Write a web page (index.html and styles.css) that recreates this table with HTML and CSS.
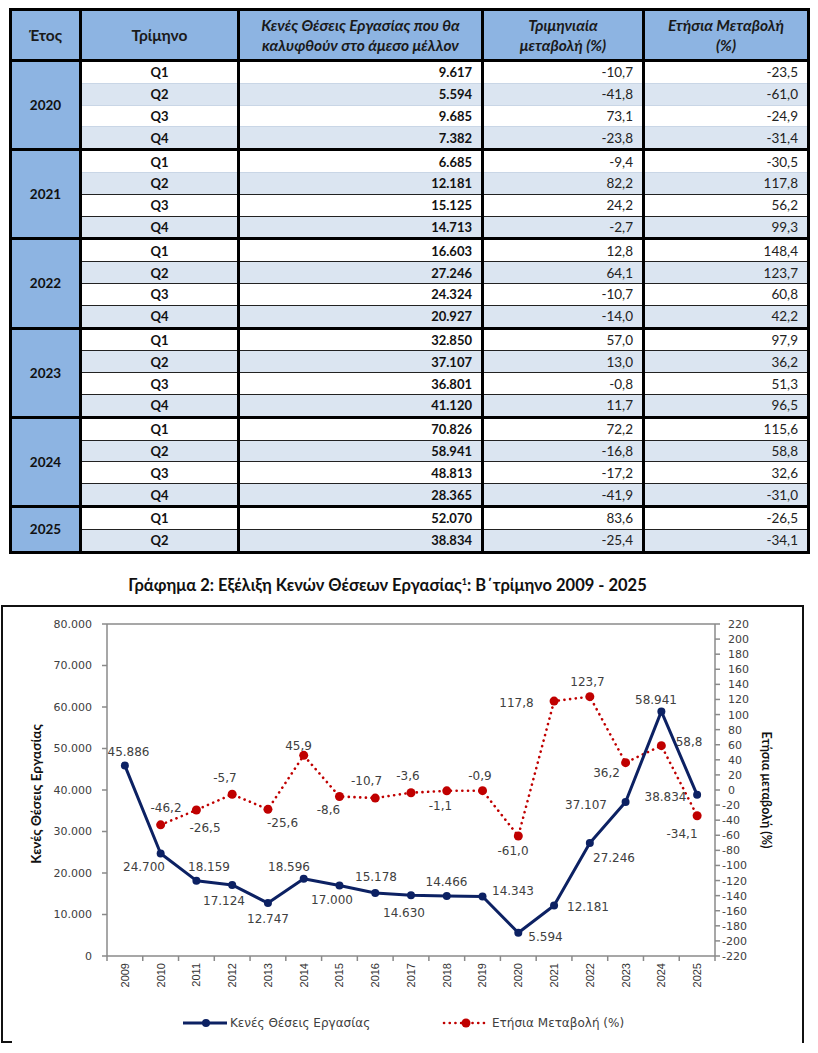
FILE: index.html
```html
<!DOCTYPE html>
<html lang="el">
<head>
<meta charset="utf-8">
<title>Κενές Θέσεις Εργασίας</title>
<link rel="stylesheet" href="styles.css">
</head>
<body>
<div class="page">
  <table class="data">
    <colgroup>
      <col class="c-year"><col class="c-q"><col class="c-val"><col class="c-qq"><col class="c-yy">
    </colgroup>
    <thead>
      <tr>
        <th>Έτος</th>
        <th>Τρίμηνο</th>
        <th class="it">Κενές Θέσεις Εργασίας που θα<br>καλυφθούν στο άμεσο μέλλον</th>
        <th class="it">Τριμηνιαία<br>μεταβολή (%)</th>
        <th class="it">Ετήσια Μεταβολή<br>(%)</th>
      </tr>
    </thead>
    <tbody class="soft">
      <tr><td class="year" rowspan="4">2020</td><td class="q">Q1</td><td class="v">9.617</td><td class="n">-10,7</td><td class="n">-23,5</td></tr>
      <tr class="alt"><td class="q">Q2</td><td class="v">5.594</td><td class="n">-41,8</td><td class="n">-61,0</td></tr>
      <tr><td class="q">Q3</td><td class="v">9.685</td><td class="n">73,1</td><td class="n">-24,9</td></tr>
      <tr class="alt"><td class="q">Q4</td><td class="v">7.382</td><td class="n">-23,8</td><td class="n">-31,4</td></tr>
    </tbody>
    <tbody>
      <tr><td class="year" rowspan="4">2021</td><td class="q">Q1</td><td class="v">6.685</td><td class="n">-9,4</td><td class="n">-30,5</td></tr>
      <tr class="alt soft-top"><td class="q">Q2</td><td class="v">12.181</td><td class="n">82,2</td><td class="n">117,8</td></tr>
      <tr><td class="q">Q3</td><td class="v">15.125</td><td class="n">24,2</td><td class="n">56,2</td></tr>
      <tr class="alt"><td class="q">Q4</td><td class="v">14.713</td><td class="n">-2,7</td><td class="n">99,3</td></tr>
    </tbody>
    <tbody>
      <tr><td class="year" rowspan="4">2022</td><td class="q">Q1</td><td class="v">16.603</td><td class="n">12,8</td><td class="n">148,4</td></tr>
      <tr class="alt"><td class="q">Q2</td><td class="v">27.246</td><td class="n">64,1</td><td class="n">123,7</td></tr>
      <tr><td class="q">Q3</td><td class="v">24.324</td><td class="n">-10,7</td><td class="n">60,8</td></tr>
      <tr class="alt"><td class="q">Q4</td><td class="v">20.927</td><td class="n">-14,0</td><td class="n">42,2</td></tr>
    </tbody>
    <tbody>
      <tr><td class="year" rowspan="4">2023</td><td class="q">Q1</td><td class="v">32.850</td><td class="n">57,0</td><td class="n">97,9</td></tr>
      <tr class="alt"><td class="q">Q2</td><td class="v">37.107</td><td class="n">13,0</td><td class="n">36,2</td></tr>
      <tr><td class="q">Q3</td><td class="v">36.801</td><td class="n">-0,8</td><td class="n">51,3</td></tr>
      <tr class="alt"><td class="q">Q4</td><td class="v">41.120</td><td class="n">11,7</td><td class="n">96,5</td></tr>
    </tbody>
    <tbody>
      <tr><td class="year" rowspan="4">2024</td><td class="q">Q1</td><td class="v">70.826</td><td class="n">72,2</td><td class="n">115,6</td></tr>
      <tr class="alt"><td class="q">Q2</td><td class="v">58.941</td><td class="n">-16,8</td><td class="n">58,8</td></tr>
      <tr><td class="q">Q3</td><td class="v">48.813</td><td class="n">-17,2</td><td class="n">32,6</td></tr>
      <tr class="alt"><td class="q">Q4</td><td class="v">28.365</td><td class="n">-41,9</td><td class="n">-31,0</td></tr>
    </tbody>
    <tbody>
      <tr><td class="year" rowspan="2">2025</td><td class="q">Q1</td><td class="v">52.070</td><td class="n">83,6</td><td class="n">-26,5</td></tr>
      <tr class="alt"><td class="q">Q2</td><td class="v">38.834</td><td class="n">-25,4</td><td class="n">-34,1</td></tr>
    </tbody>
  </table>

  <h2 class="chart-title">Γράφημα 2: Εξέλιξη Κενών Θέσεων Εργασίας<sup>1</sup>: Β΄τρίμηνο 2009 - 2025</h2>

  <div class="chart-box">
    <svg class="chart" width="799" height="436" viewBox="3 607 799 436" xmlns="http://www.w3.org/2000/svg">
      <g class="frame">
        <line x1="107" y1="624" x2="715" y2="624"/>
        <line x1="107" y1="624" x2="107" y2="956"/>
        <line x1="715" y1="624" x2="715" y2="956"/>
        <line x1="107" y1="956" x2="715" y2="956"/>
      </g>
      <g class="frame">
        <line x1="102" y1="956" x2="107" y2="956"/><line x1="102" y1="914.5" x2="107" y2="914.5"/>
        <line x1="102" y1="873" x2="107" y2="873"/><line x1="102" y1="831.5" x2="107" y2="831.5"/>
        <line x1="102" y1="790" x2="107" y2="790"/><line x1="102" y1="748.5" x2="107" y2="748.5"/>
        <line x1="102" y1="707" x2="107" y2="707"/><line x1="102" y1="665.5" x2="107" y2="665.5"/>
        <line x1="102" y1="624" x2="107" y2="624"/>
      </g>
      <g class="axlbl" text-anchor="end">
        <text x="92" y="956" dy=".36em">0</text>
        <text x="92" y="914.5" dy=".36em">10.000</text>
        <text x="92" y="873" dy=".36em">20.000</text>
        <text x="92" y="831.5" dy=".36em">30.000</text>
        <text x="92" y="790" dy=".36em">40.000</text>
        <text x="92" y="748.5" dy=".36em">50.000</text>
        <text x="92" y="707" dy=".36em">60.000</text>
        <text x="92" y="665.5" dy=".36em">70.000</text>
        <text x="92" y="624" dy=".36em">80.000</text>
      </g>
      <g class="frame">
        <line x1="715" y1="624" x2="720" y2="624"/><line x1="715" y1="639.09" x2="720" y2="639.09"/>
        <line x1="715" y1="654.18" x2="720" y2="654.18"/><line x1="715" y1="669.27" x2="720" y2="669.27"/>
        <line x1="715" y1="684.36" x2="720" y2="684.36"/><line x1="715" y1="699.45" x2="720" y2="699.45"/>
        <line x1="715" y1="714.55" x2="720" y2="714.55"/><line x1="715" y1="729.64" x2="720" y2="729.64"/>
        <line x1="715" y1="744.73" x2="720" y2="744.73"/><line x1="715" y1="759.82" x2="720" y2="759.82"/>
        <line x1="715" y1="774.91" x2="720" y2="774.91"/><line x1="715" y1="790" x2="720" y2="790"/>
        <line x1="715" y1="805.09" x2="720" y2="805.09"/><line x1="715" y1="820.18" x2="720" y2="820.18"/>
        <line x1="715" y1="835.27" x2="720" y2="835.27"/><line x1="715" y1="850.36" x2="720" y2="850.36"/>
        <line x1="715" y1="865.45" x2="720" y2="865.45"/><line x1="715" y1="880.55" x2="720" y2="880.55"/>
        <line x1="715" y1="895.64" x2="720" y2="895.64"/><line x1="715" y1="910.73" x2="720" y2="910.73"/>
        <line x1="715" y1="925.82" x2="720" y2="925.82"/><line x1="715" y1="940.91" x2="720" y2="940.91"/>
        <line x1="715" y1="956" x2="720" y2="956"/>
      </g>
      <g class="axlbl">
        <text x="728" y="624" dy=".36em">220</text>
        <text x="728" y="639.09" dy=".36em">200</text>
        <text x="728" y="654.18" dy=".36em">180</text>
        <text x="728" y="669.27" dy=".36em">160</text>
        <text x="728" y="684.36" dy=".36em">140</text>
        <text x="728" y="699.45" dy=".36em">120</text>
        <text x="728" y="714.55" dy=".36em">100</text>
        <text x="728" y="729.64" dy=".36em">80</text>
        <text x="728" y="744.73" dy=".36em">60</text>
        <text x="728" y="759.82" dy=".36em">40</text>
        <text x="728" y="774.91" dy=".36em">20</text>
        <text x="728" y="790" dy=".36em">0</text>
        <text x="722" y="805.09" dy=".36em">-20</text>
        <text x="722" y="820.18" dy=".36em">-40</text>
        <text x="722" y="835.27" dy=".36em">-60</text>
        <text x="722" y="850.36" dy=".36em">-80</text>
        <text x="722" y="865.45" dy=".36em">-100</text>
        <text x="722" y="880.55" dy=".36em">-120</text>
        <text x="722" y="895.64" dy=".36em">-140</text>
        <text x="722" y="910.73" dy=".36em">-160</text>
        <text x="722" y="925.82" dy=".36em">-180</text>
        <text x="722" y="940.91" dy=".36em">-200</text>
        <text x="722" y="956" dy=".36em">-220</text>
      </g>
      <g class="frame">
        <line x1="107" y1="956" x2="107" y2="961"/><line x1="142.76" y1="956" x2="142.76" y2="961"/>
        <line x1="178.53" y1="956" x2="178.53" y2="961"/><line x1="214.29" y1="956" x2="214.29" y2="961"/>
        <line x1="250.06" y1="956" x2="250.06" y2="961"/><line x1="285.82" y1="956" x2="285.82" y2="961"/>
        <line x1="321.59" y1="956" x2="321.59" y2="961"/><line x1="357.35" y1="956" x2="357.35" y2="961"/>
        <line x1="393.12" y1="956" x2="393.12" y2="961"/><line x1="428.88" y1="956" x2="428.88" y2="961"/>
        <line x1="464.65" y1="956" x2="464.65" y2="961"/><line x1="500.41" y1="956" x2="500.41" y2="961"/>
        <line x1="536.18" y1="956" x2="536.18" y2="961"/><line x1="571.94" y1="956" x2="571.94" y2="961"/>
        <line x1="607.71" y1="956" x2="607.71" y2="961"/><line x1="643.47" y1="956" x2="643.47" y2="961"/>
        <line x1="679.24" y1="956" x2="679.24" y2="961"/><line x1="715" y1="956" x2="715" y2="961"/>
      </g>
      <g class="yrlbl" text-anchor="end">
        <text transform="translate(124.88 963) rotate(-90)" dy=".36em">2009</text>
        <text transform="translate(160.65 963) rotate(-90)" dy=".36em">2010</text>
        <text transform="translate(196.41 963) rotate(-90)" dy=".36em">2011</text>
        <text transform="translate(232.18 963) rotate(-90)" dy=".36em">2012</text>
        <text transform="translate(267.94 963) rotate(-90)" dy=".36em">2013</text>
        <text transform="translate(303.71 963) rotate(-90)" dy=".36em">2014</text>
        <text transform="translate(339.47 963) rotate(-90)" dy=".36em">2015</text>
        <text transform="translate(375.24 963) rotate(-90)" dy=".36em">2016</text>
        <text transform="translate(411 963) rotate(-90)" dy=".36em">2017</text>
        <text transform="translate(446.77 963) rotate(-90)" dy=".36em">2018</text>
        <text transform="translate(482.53 963) rotate(-90)" dy=".36em">2019</text>
        <text transform="translate(518.3 963) rotate(-90)" dy=".36em">2020</text>
        <text transform="translate(554.06 963) rotate(-90)" dy=".36em">2021</text>
        <text transform="translate(589.83 963) rotate(-90)" dy=".36em">2022</text>
        <text transform="translate(625.59 963) rotate(-90)" dy=".36em">2023</text>
        <text transform="translate(661.36 963) rotate(-90)" dy=".36em">2024</text>
        <text transform="translate(697.12 963) rotate(-90)" dy=".36em">2025</text>
      </g>
      <text class="axtitle axtitle-l" text-anchor="middle" transform="translate(36 794) rotate(-90)" dy=".36em">Κενές Θέσεις Εργασίας</text>
      <text class="axtitle" text-anchor="middle" transform="translate(766 790) rotate(90)" dy=".36em">Ετήσια μεταβολή (%)</text>

      <polyline class="red-line" points="160.65,824.86 196.41,810 232.18,794.3 267.94,809.32 303.71,755.37 339.47,796.49 375.24,798.07 411,792.72 446.77,790.83 482.53,790.68 518.3,836.03 554.06,701.12 589.83,696.66 625.59,762.69 661.36,745.63 697.12,815.73"/>
      <g class="red-dot">
        <circle cx="160.65" cy="824.86" r="4.5"/><circle cx="196.41" cy="810" r="4.5"/>
        <circle cx="232.18" cy="794.3" r="4.5"/><circle cx="267.94" cy="809.32" r="4.5"/>
        <circle cx="303.71" cy="755.37" r="4.5"/><circle cx="339.47" cy="796.49" r="4.5"/>
        <circle cx="375.24" cy="798.07" r="4.5"/><circle cx="411" cy="792.72" r="4.5"/>
        <circle cx="446.77" cy="790.83" r="4.5"/><circle cx="482.53" cy="790.68" r="4.5"/>
        <circle cx="518.3" cy="836.03" r="4.5"/><circle cx="554.06" cy="701.12" r="4.5"/>
        <circle cx="589.83" cy="696.66" r="4.5"/><circle cx="625.59" cy="762.69" r="4.5"/>
        <circle cx="661.36" cy="745.63" r="4.5"/><circle cx="697.12" cy="815.73" r="4.5"/>
      </g>

      <polyline class="blue-line" points="124.88,765.57 160.65,853.49 196.41,880.64 232.18,884.94 267.94,903.1 303.71,878.83 339.47,885.45 375.24,893.01 411,895.29 446.77,895.97 482.53,896.48 518.3,932.78 554.06,905.45 589.83,842.93 625.59,802.01 661.36,711.39 697.12,794.84"/>
      <g class="blue-dot">
        <circle cx="124.88" cy="765.57" r="4"/><circle cx="160.65" cy="853.49" r="4"/>
        <circle cx="196.41" cy="880.64" r="4"/><circle cx="232.18" cy="884.94" r="4"/>
        <circle cx="267.94" cy="903.1" r="4"/><circle cx="303.71" cy="878.83" r="4"/>
        <circle cx="339.47" cy="885.45" r="4"/><circle cx="375.24" cy="893.01" r="4"/>
        <circle cx="411" cy="895.29" r="4"/><circle cx="446.77" cy="895.97" r="4"/>
        <circle cx="482.53" cy="896.48" r="4"/><circle cx="518.3" cy="932.78" r="4"/>
        <circle cx="554.06" cy="905.45" r="4"/><circle cx="589.83" cy="842.93" r="4"/>
        <circle cx="625.59" cy="802.01" r="4"/><circle cx="661.36" cy="711.39" r="4"/>
        <circle cx="697.12" cy="794.84" r="4"/>
      </g>

      <g class="dlbl" text-anchor="middle">
        <text x="128.5" y="752" dy=".36em">45.886</text>
        <text x="144" y="867" dy=".36em">24.700</text>
        <text x="209" y="867" dy=".36em">18.159</text>
        <text x="224" y="901" dy=".36em">17.124</text>
        <text x="268" y="919" dy=".36em">12.747</text>
        <text x="289" y="867" dy=".36em">18.596</text>
        <text x="332" y="900" dy=".36em">17.000</text>
        <text x="376" y="877" dy=".36em">15.178</text>
        <text x="404" y="913" dy=".36em">14.630</text>
        <text x="446.5" y="882" dy=".36em">14.466</text>
        <text x="513" y="891" dy=".36em">14.343</text>
        <text x="545.5" y="937" dy=".36em">5.594</text>
        <text x="588" y="907" dy=".36em">12.181</text>
        <text x="614" y="858" dy=".36em">27.246</text>
        <text x="586" y="805" dy=".36em">37.107</text>
        <text x="656" y="700" dy=".36em">58.941</text>
        <text x="665.5" y="797" dy=".36em">38.834</text>

        <text x="166" y="808" dy=".36em">-46,2</text>
        <text x="205" y="828" dy=".36em">-26,5</text>
        <text x="225" y="778" dy=".36em">-5,7</text>
        <text x="282.5" y="823" dy=".36em">-25,6</text>
        <text x="298.5" y="746" dy=".36em">45,9</text>
        <text x="328.5" y="810" dy=".36em">-8,6</text>
        <text x="366.5" y="781" dy=".36em">-10,7</text>
        <text x="408" y="776" dy=".36em">-3,6</text>
        <text x="440.5" y="806" dy=".36em">-1,1</text>
        <text x="480" y="776" dy=".36em">-0,9</text>
        <text x="513" y="851" dy=".36em">-61,0</text>
        <text x="516.5" y="703" dy=".36em">117,8</text>
        <text x="587.5" y="682" dy=".36em">123,7</text>
        <text x="606.5" y="773" dy=".36em">36,2</text>
        <text x="689" y="742" dy=".36em">58,8</text>
        <text x="682" y="834" dy=".36em">-34,1</text>
      </g>

      <line class="blue-line" x1="183" y1="1023" x2="227" y2="1023"/>
      <circle class="blue-dot" cx="206" cy="1023" r="4"/>
      <text class="leg" x="230" y="1023" dy=".36em">Κενές Θέσεις Εργασίας</text>
      <line class="red-line" x1="444" y1="1023" x2="488" y2="1023"/>
      <circle class="red-dot" cx="466" cy="1023" r="4.5"/>
      <text class="leg" x="492" y="1023" dy=".36em">Ετήσια Μεταβολή (%)</text>

      <line class="stub" x1="3" y1="1042" x2="12" y2="1042"/>
    </svg>
  </div>
</div>
</body>
</html>
```

FILE: styles.css
```css
html, body {
  margin: 0;
  padding: 0;
  background: #ffffff;
}

.page {
  width: 818px;
  padding-top: 8px;
  font-family: Lato, "Open Sans", "Noto Sans", sans-serif;
  color: #111;
}

/* ---------- table ---------- */
.data {
  margin-left: 9px;
  width: 798px;
  table-layout: fixed;
  border-collapse: collapse;
  border: 3px solid #000;
  font-size: 13px;
}

.c-year { width: 70px; }
.c-q { width: 158px; }
.c-val { width: 244px; }
.c-qq { width: 161px; }
.c-yy { width: 165px; }

.data th {
  height: 48px;
  padding: 0 4px;
  background: #8db4e2;
  border: 3px solid #000;
  font-weight: 700;
  font-size: 15.5px;
  line-height: 20px;
  color: #1a1a1a;
  text-align: center;
  vertical-align: middle;
}

.data th.it {
  font-style: italic;
}

.data tbody {
  border-top: 3px solid #000;
  border-bottom: 3px solid #000;
}

.data td {
  height: 20.8px;
  padding: 0 9px;
  border-left: 3px solid #000;
  border-right: 3px solid #000;
  border-top: 1px solid #222;
  line-height: 20px;
  white-space: nowrap;
  background: #ffffff;
}

.data tr.alt td {
  background: #dbe5f1;
}

.data tbody.soft td,
.data tr.soft-top td {
  border-top: 1px solid #c9d6e6;
}

.data td.year {
  background: #8db4e2;
  border: 3px solid #000;
  text-align: center;
  font-weight: 700;
  font-size: 13.5px;
  padding: 0;
}

.data tr.alt td.year,
.data tbody.soft td.year {
  background: #8db4e2;
}

.data td.q {
  text-align: center;
  font-weight: 700;
}

.data td.v {
  text-align: right;
  font-weight: 700;
}

.data td.n {
  text-align: right;
  font-weight: 400;
  font-size: 13.5px;
  color: #222;
}

/* ---------- chart title ---------- */
.chart-title {
  margin: 21px 0 10px;
  height: 20px;
  padding-right: 43px;
  font-size: 16.5px;
  line-height: 20px;
  font-weight: 700;
  text-align: center;
  color: #111;
}

.chart-title sup {
  font-size: 9px;
  line-height: 0;
  vertical-align: 6px;
}

/* ---------- chart ---------- */
.chart-box {
  margin-left: 1px;
  width: 799px;
  height: 436px;
  border: 2px solid #111;
  border-bottom: none;
}

.chart {
  display: block;
}

.frame line {
  stroke: #8a8a8a;
  stroke-width: 1.5;
}

.axlbl text {
  font-family: "DejaVu Sans", Verdana, sans-serif;
  font-size: 11px;
  fill: #404040;
}

.yrlbl text {
  font-family: "Liberation Sans", Arial, sans-serif;
  font-size: 11px;
  fill: #333;
}

.axtitle {
  font-family: Lato, "Open Sans", sans-serif;
  font-size: 12.5px;
  font-weight: 700;
  fill: #111;
}

.axtitle-l {
  font-size: 13.5px;
}

.dlbl text {
  font-family: "DejaVu Sans", Verdana, sans-serif;
  font-size: 12px;
  fill: #404040;
}

.leg {
  font-family: "DejaVu Sans", Verdana, sans-serif;
  font-size: 12px;
  fill: #404040;
}

.blue-line {
  fill: none;
  stroke: #0c2163;
  stroke-width: 3;
  stroke-linejoin: round;
}

.blue-dot circle,
circle.blue-dot {
  fill: #0c2163;
}

.red-line {
  fill: none;
  stroke: #c00000;
  stroke-width: 2.6;
  stroke-linecap: round;
  stroke-dasharray: 0.1 5.6;
}

.red-dot circle,
circle.red-dot {
  fill: #c00000;
}

.stub {
  stroke: #111;
  stroke-width: 2;
}
```
